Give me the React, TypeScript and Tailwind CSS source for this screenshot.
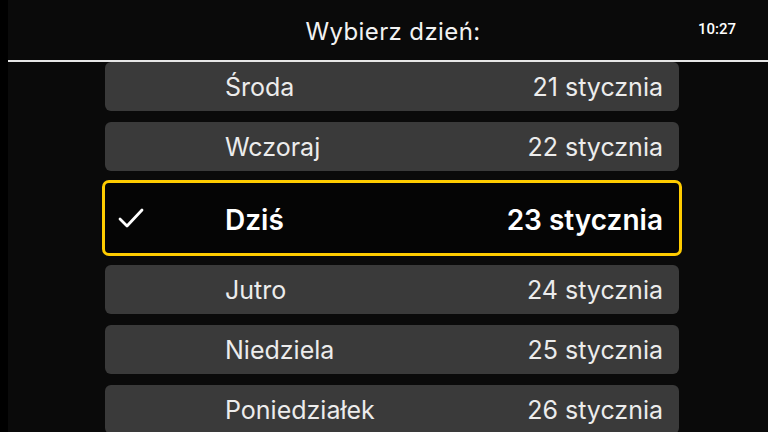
type Day = { name: string; date: string; selected?: boolean }

const days: Day[] = [
    { name: "Środa", date: "21 stycznia" },
    { name: "Wczoraj", date: "22 stycznia" },
    { name: "Dziś", date: "23 stycznia", selected: true },
    { name: "Jutro", date: "24 stycznia" },
    { name: "Niedziela", date: "25 stycznia" },
    { name: "Poniedziałek", date: "26 stycznia" },
]

function CheckMark() {
    return (
        <svg width="28" height="24" viewBox="0 0 28 24" fill="none" stroke="currentColor" strokeWidth="2.8" strokeLinecap="round" strokeLinejoin="round">
            <polyline points="3,13 10,20 25,4" />
        </svg>
    )
}

export default function App() {
    return (
        <div className="flex h-[432px] w-[768px] overflow-hidden bg-black" style={{ fontFamily: "Inter, 'Noto Sans', sans-serif" }}>
            <div className="w-[8px] shrink-0 bg-black" />
            <div className="flex flex-1 flex-col bg-[#0a0a0a]">
                {/* header */}
                <div className="relative flex h-[60px] shrink-0 items-center justify-center pl-[10px] pt-[4px]">
                    <span className="text-[24px] tracking-[0.4px] text-[#f2f2f2]">
                        Wybierz dzień:
                    </span>
                    <span className="absolute right-[32px] top-[18px] text-[15px] font-medium text-white" style={{ fontFamily: "Roboto, sans-serif" }}>
                        10:27
                    </span>
                </div>
                <div className="h-[2px] shrink-0 bg-[#e6e6e6]" />

                {/* list */}
                <div className="ml-[97px] flex w-[574px] flex-col gap-[11px]">
                    {days.map((day) =>
                        day.selected ? (
                            <div
                                key={day.name}
                                className="-mx-[3px] -my-[2px] flex h-[76px] shrink-0 items-center rounded-[7px] border-[3px] border-[#ffcc00] bg-[#050505] pl-[12px] pr-[16px] text-white"
                            >
                                <CheckMark />
                                <span className="ml-[80px] pt-[3px] text-[28px] font-semibold">{day.name}</span>
                                <span className="ml-auto pt-[3px] text-[28px] font-semibold">{day.date}</span>
                            </div>
                        ) : (
                            <div
                                key={day.name}
                                className="flex h-[49px] shrink-0 items-center rounded-[6px] bg-[#3a3a3a] pl-[120px] pr-[16px] pt-[2px] text-[#ececec]"
                            >
                                <span className="text-[25px]">{day.name}</span>
                                <span className="ml-auto text-[25px]">{day.date}</span>
                            </div>
                        )
                    )}
                </div>
            </div>
        </div>
    )
}
